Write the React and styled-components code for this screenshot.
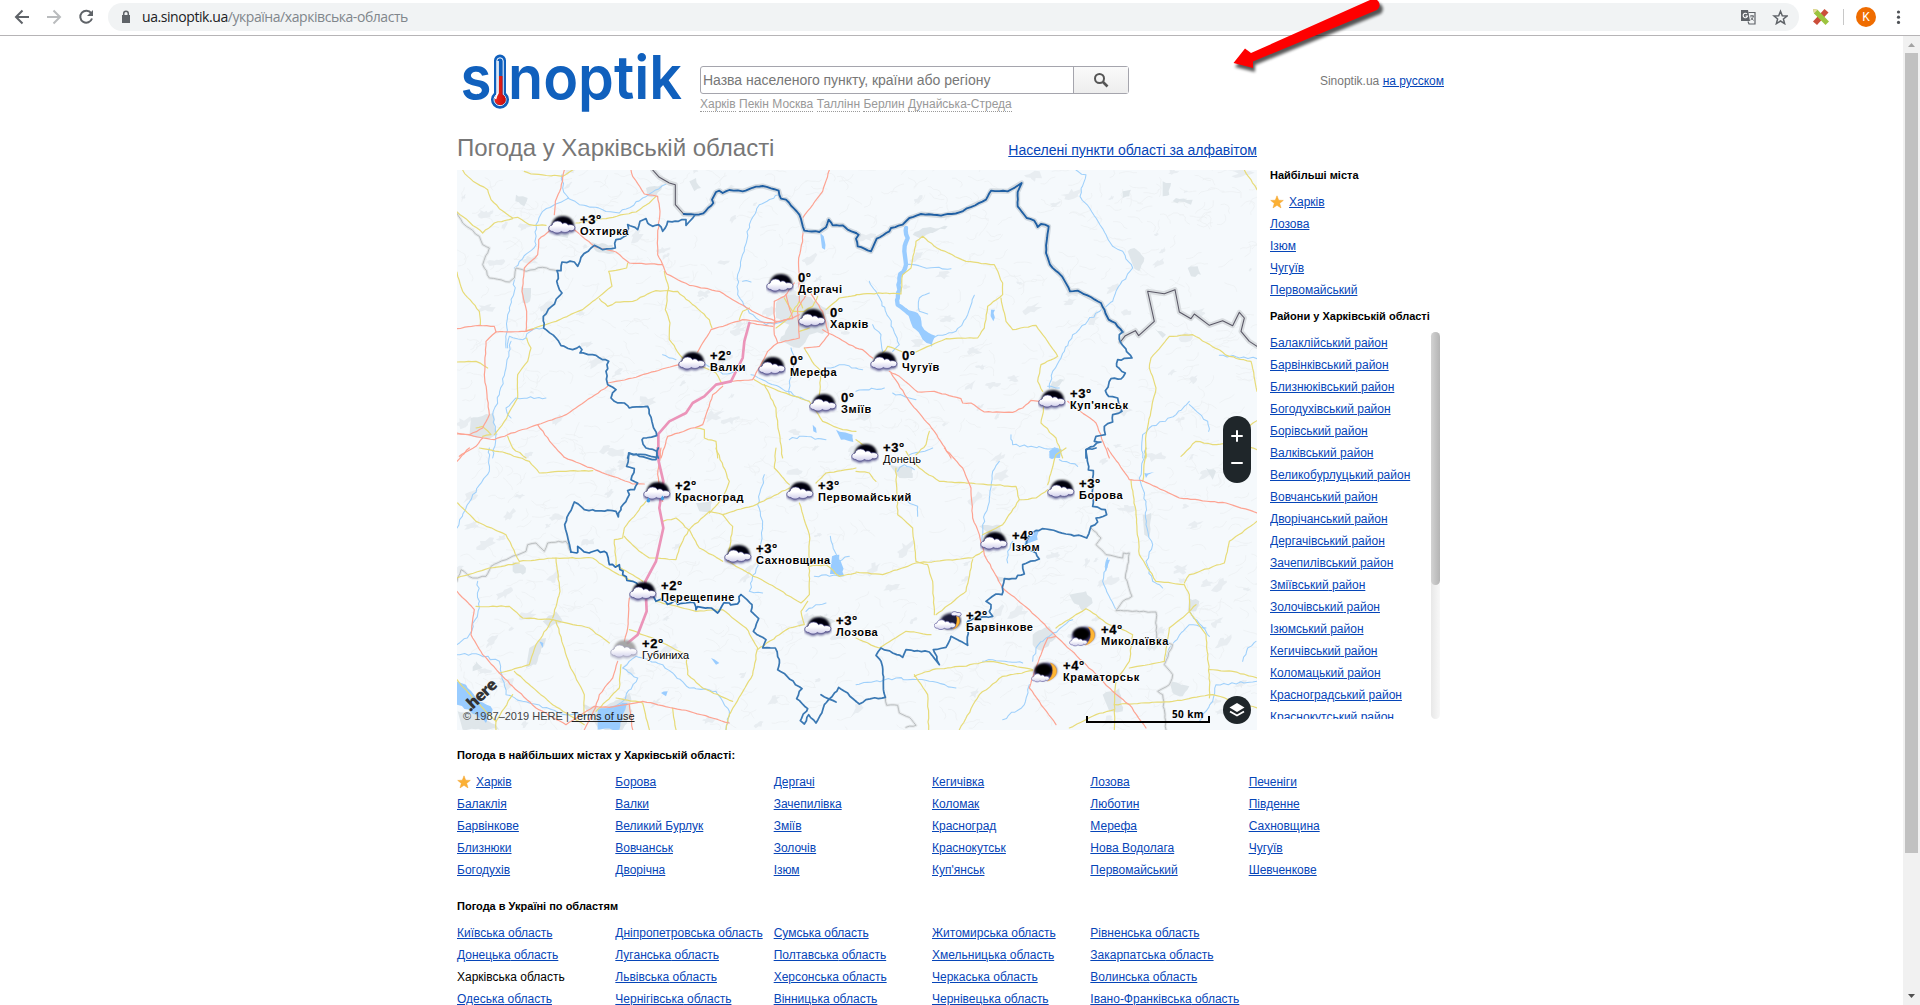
import React from "react";
import styled, { createGlobalStyle } from "styled-components";

const GlobalStyle = createGlobalStyle`
  html, body { margin: 0; height: 1005px; overflow: hidden; background: #fff; }
  * { box-sizing: border-box; }
  body { font-family: "Liberation Sans", Arial, sans-serif; font-size: 12px; color: #000; }
`;

/* ---------- browser frame ---------- */

const Screen = styled.div`
  position: relative;
  width: 1920px;
  height: 1005px;
  overflow: hidden;
  display: flex;
  flex-direction: column;
`;
const Toolbar = styled.header`
  flex: none;
  height: 36px;
  display: flex;
  align-items: center;
  padding: 0 0 2px 12px;
  border-bottom: 1px solid #b6b4b6;
  background: #fff;
`;
const NavButtons = styled.div`
  display: flex;
  gap: 12px;
  width: 96px;
`;
const Omnibox = styled.div`
  width: 1691px;
  height: 28px;
  border-radius: 14px;
  background: #f1f3f4;
  display: flex;
  align-items: center;
  padding: 0 11px 0 13px;
`;
const Url = styled.div`
  flex: 1;
  margin-left: 11px;
  font: 14px/20px "Open Sans", "Noto Sans", sans-serif;
  letter-spacing: -0.44px;
  color: #80868b;
  white-space: nowrap;
  b { font-weight: 400; color: #202124; letter-spacing: -0.43px; }
`;
const OmniIcons = styled.div`
  display: flex;
  align-items: center;
  gap: 16px;
`;
const ToolbarEnd = styled.div`
  display: flex;
  align-items: center;
  margin-left: 13px;
`;
const Divider = styled.span`
  width: 1px;
  height: 16px;
  margin: 0 12px 0 13px;
  background: #c8c8c8;
`;
const Avatar = styled.span`
  width: 20px;
  height: 20px;
  border-radius: 50%;
  background: #ef6c00;
  color: #fff;
  font: 12px/20px Roboto, sans-serif;
  text-align: center;
  margin-right: 20px;
`;
const Viewport = styled.div`
  flex: 1;
  display: flex;
  min-height: 0;
`;
const Page = styled.main`
  flex: 1;
  padding: 13px 0 0 457px;
  overflow: hidden;
`;
const ScrollTrack = styled.div`
  width: 17px;
  padding: 0 2px;
  background: #f1f1f1;
  display: flex;
  flex-direction: column;
  justify-content: space-between;
`;
const ScrollArrow = styled.svg`
  display: block;
  width: 13px;
  height: 17px;
`;
const ScrollThumb = styled.div`
  height: 800px;
  margin-bottom: auto;
  background: #c1c1c1;
`;
const RedArrow = styled.svg`
  position: absolute;
  left: 1220px;
  top: 0;
`;

/* ---------- page header ---------- */

const Header = styled.div`
  display: flex;
  width: 986px;
  height: 79px;
`;
const LogoSvg = styled.svg`
  flex: none;
  width: 243px;
  height: 78px;
  overflow: visible;
`;
const SearchBlock = styled.div`
  width: 429px;
  padding-top: 17px;
`;
const SearchBox = styled.div`
  display: flex;
  height: 28px;
  border: 1px solid #a5a5ad;
  border-radius: 3px;
`;
const SearchInput = styled.div`
  flex: 1;
  padding-left: 2px;
  font-size: 14px;
  line-height: 26px;
  letter-spacing: -0.02px;
  color: #777;
  white-space: nowrap;
`;
const SearchButton = styled.div`
  width: 55px;
  border-left: 1px solid #a5a5ad;
  background: linear-gradient(#fafafa, #ededed);
  display: flex;
  align-items: center;
  justify-content: center;
`;
const Hints = styled.div`
  display: flex;
  gap: 3.4px;
  padding-top: 3px;
  span {
    font-size: 12px;
    line-height: 14px;
    color: #999;
    border-bottom: 1px dotted #999;
    white-space: nowrap;
  }
`;
const LangSwitch = styled.div`
  margin: 0 -1px 0 auto;
  padding-top: 25px;
  line-height: 14px;
  color: #777;
`;
const Link = styled.a`
  color: #0645b8;
  text-decoration: underline;
  text-underline-offset: 1px;
  white-space: nowrap;
`;

/* ---------- content ---------- */

const Columns = styled.div`
  display: flex;
  gap: 13px;
`;
const MapColumn = styled.section`
  width: 800px;
`;
const TitleRow = styled.div`
  display: flex;
  justify-content: space-between;
  height: 42px;
`;
const Title = styled.h1`
  margin: 0;
  font-size: 24px;
  font-weight: 400;
  line-height: 40px;
  color: #777;
  white-space: nowrap;
`;
const TitleLink = styled(Link)`
  font-size: 14px;
  line-height: 45px;
`;
const SideColumn = styled.aside`
  width: 173px;
  padding-top: 40px;
`;
const SideHeading = styled.h2`
  margin: ${(p) => p.$top || 0}px 0 9px;
  font-size: 11px;
  line-height: 14px;
  font-weight: 700;
  white-space: nowrap;
`;
const List = styled.div`
  display: flex;
  flex-direction: column;
`;
const Item = styled.div`
  display: flex;
  align-items: center;
  height: 22px;
  line-height: 22px;
  white-space: nowrap;
  gap: 5px;
`;
const Districts = styled.div`
  display: flex;
  justify-content: space-between;
  width: 170px;
  height: 387px;
  overflow: hidden;
`;
const SideTrack = styled.div`
  width: 9px;
  height: 387px;
  border-radius: 5px;
  background: linear-gradient(90deg, #e8e8e8, #f8f8f8);
  &::before {
    content: "";
    display: block;
    height: 253px;
    border-radius: 5px;
    background: linear-gradient(90deg, #d2d2d2, #b4b4b4);
  }
`;
const SectionHeading = styled.h2`
  margin: 18px 0 9px;
  font-size: 11px;
  line-height: 14px;
  font-weight: 700;
`;
const Grid = styled.div`
  display: grid;
  width: 950px;
  grid-template-columns: repeat(6, 1fr);
  grid-template-rows: repeat(${(p) => p.$rows}, 22px);
  grid-auto-flow: column;
`;

/* ---------- map ---------- */

const MapBox = styled.div`
  position: relative;
  width: 800px;
  height: 560px;
  overflow: hidden;
  background: #f5f9fc;
`;
const MapCanvas = styled.svg`
  display: block;
`;
const Pin = styled.div`
  position: absolute;
  display: flex;
  gap: 4px;
  transform: translate(-14px, -12px);
`;
const PinText = styled.div`
  display: flex;
  flex-direction: column;
  white-space: nowrap;
  color: #000;
  text-shadow: 1px 0 #fff, -1px 0 #fff, 0 1px #fff, 0 -1px #fff;
`;
const Temp = styled.span`
  font-size: 13px;
  line-height: 12px;
  height: 11px;
  font-weight: 700;
  letter-spacing: 0.6px;
  -webkit-text-stroke: 0.3px #000;
`;
const PinName = styled.span`
  font-size: 11px;
  line-height: 12px;
  font-weight: ${(p) => (p.$minor ? 400 : 700)};
  letter-spacing: ${(p) => (p.$minor ? 0 : 0.55)}px;
`;
const ZoomPill = styled.div`
  position: absolute;
  left: 766px;
  top: 246px;
  width: 28px;
  height: 67px;
  border-radius: 14px;
  background: #1f262a;
`;
const LayerButton = styled.div`
  position: absolute;
  left: 766px;
  top: 526px;
  width: 28px;
  height: 28px;
  border-radius: 50%;
  background: #1f262a;
`;
const ScaleBar = styled.div`
  position: absolute;
  left: 629px;
  top: 546px;
  width: 124px;
  height: 7px;
  border: 2px solid #000;
  border-top: 0;
`;
const ScaleText = styled.div`
  position: absolute;
  left: 715px;
  top: 537px;
  font: 700 10px/14px "Noto Sans", sans-serif;
  letter-spacing: 0.4px;
`;
const Copyright = styled.div`
  position: absolute;
  left: 6px;
  top: 539px;
  line-height: 14px;
  font-size: 11px;
  color: #444;
  white-space: nowrap;
  u { color: #222; }
`;
const HereLogo = styled.div`
  position: absolute;
  left: 4px;
  top: 513px;
  font: 800 16px/24px "Open Sans", sans-serif;
  letter-spacing: -1px;
  color: #333;
  transform: rotate(-43deg);
`;

/* Terrain lines. Every quadrant has its own origin; units are thirds of a pixel. */
const quads = [
  {
    at: [0, 0],
    urban: ["960 405 990 378 1050 385 1110 420 1120 490 1060 500 1030 540 970 520 1000 470 960 450", "45 750 110 735 125 800 100 812 40 805", "195 355 225 360 222 400 200 405", "290 180 340 195 335 210 300 200", "180 80 215 90 205 115 178 100", "400 225 470 230 475 255 420 250", "700 40 720 30 735 60 715 70", "570 60 620 50 600 85 575 85"],
    lakes: ["1092 190 1103 205 1107 245 1098 240", "1140 785 1190 800 1192 822 1155 815", "1070 770 1080 780 1082 795 1072 790"],
    rivers: ["318 20 320 60 338 90 260 130 240 170 240 230 175 300 175 370 155 440 150 540", "335 90 370 110 440 125 490 135 560 90 640 42", "263 480 230 485 200 515 160 505 155 540", "970 80 910 110 880 170 865 250 845 320 845 380 880 435 930 470 1000 455", "165 520 150 600 130 680 110 740 120 800 110 870", "165 750 150 720 180 690 270 690", "750 590 800 618 850 610 860 590", "885 620 930 640 990 670 1060 700", "1005 540 1020 580 1000 640 1000 680", "1000 815 1030 805 1110 815", "1200 600 1150 590 1110 600", "620 560 660 575", "860 340 885 342"],
    yellow: ["20 6 35 25 60 45 95 65 105 95 130 122 170 150 185 148 220 170 270 172", "3 132 80 195 115 165 170 152", "205 10 225 18 320 25 350 6", "360 165 450 152 540 132 580 105 600 85", "3 312 20 370 70 430 73 470", "212 488 300 460 380 425 468 355 458 310 512 300 515 285", "430 392 455 415 480 402 530 400 600 368 665 370 700 400 760 455 768 480", "625 310 638 360 628 425 642 465 640 515 680 570", "212 510 225 540 215 580 185 620 185 690 145 760 115 800", "3 582 60 580 95 600", "155 805 170 840 210 870", "730 590 780 615 800 650", "895 635 920 650 1000 680 1060 700 1100 760 1160 785 1200 790", "925 650 960 720 965 770 980 870", "720 780 745 785 745 810 780 820 785 870", "1045 540 1075 590 1095 610 1090 680", "1110 425 1150 390 1200 382", "985 390 1010 430 1045 430 1070 415 1085 385", "960 480 1000 450 1030 400 1040 420", "60 780 80 775 105 800 80 805", "850 455 860 430 880 420", "1030 490 1060 480"],
    red: ["325 6 315 60 298 100 295 140", "290 180 248 215 245 260 205 300 198 370 212 430 210 490", "3 482 70 472 115 475 120 492 210 490 230 485", "120 492 90 520 85 620 100 740 80 780 40 800 3 798", "3 795 115 815 155 800 245 770 330 740 455 655", "80 810 60 835 10 865", "245 770 290 830 325 868", "455 645 530 630 630 600 670 590", "355 185 415 235 480 252 520 285 620 290 632 318 700 352 790 370 830 395 900 435 960 460 1010 452", "525 6 530 25 565 78 605 85 612 130 605 200 605 260 620 290", "1120 6 1100 70 1040 150 1040 220 1028 270 1030 400", "725 552 765 485 860 455 955 465 1010 450", "880 465 950 475", "955 400 955 500 965 525 1030 510 1025 420 1050 380", "820 640 890 635 935 550 965 525", "955 400 985 385 1015 345", "990 380 1010 450 1030 440", "1045 540 1090 535 1118 500 1100 430 1060 370", "1100 485 1200 540", "800 655 770 680 740 770 635 805 615 870"],
    pink: "880 465 865 520 860 570 825 640 780 650 745 685 710 705 690 735 640 760 607 798 607 870",
    minor: ["3 135 20 165 70 205 80 230 100 240 80 290 100 330 160 342 175 330 180 300 210 310 260 298 303 308"],
    state: ["590 6 610 28 640 45 658 50 658 110 683 138"],
    blueState: ["683 138 716 140 742 136 772 105 768 95 780 72 790 68 800 75 820 66 860 70 900 56 920 54 968 68 975 92 990 95 1030 140 1045 188 1090 192 1110 178 1118 155 1130 172 1160 172 1175 185 1200 195"],
    blue: ["607 870 602 850 570 840 558 815 562 810 602 803 575 715 520 720 505 705 475 700 465 690 480 665 455 650 450 610 458 580 440 575 420 562 372 555 378 545 370 535 350 545 315 533 300 510 263 480 262 445 318 375 305 350 303 308 315 308 318 282 355 282 365 295 375 268 415 232 440 245 478 240 480 215 515 200 515 170 545 185 552 160 570 152 575 165 590 175 608 170 620 190 635 160 690 155 690 172 716 142", "515 870 520 855 602 868"],
  },
  {
    at: [1200, 0],
    urban: ["170 200 200 180 275 175 230 195 190 210", "815 250 835 240 865 270 850 310 830 290", "920 40 945 45 940 80 920 85", "995 300 1025 295 1035 320 1005 325", "800 70 825 65 820 85 800 90", "590 640 625 635 600 660 580 660", "895 480 930 500 920 510", "960 90 1010 95 1005 110 950 100"],
    lakes: ["150 420 185 435 205 485 238 503 228 538 195 505 165 465", "405 425 417 425 412 460 404 445", "580 850 595 838 618 845 612 870 580 870"],
    wide: ["150 180 155 210 145 250 150 290 130 330 125 410 165 440"],
    rivers: ["150 290 200 297 285 302", "220 375 190 390 190 430 215 438", "355 382 335 440 300 490 235 508", "40 340 65 380 100 450 130 530 110 550", "50 470 75 500 80 550", "660 6 690 20 672 85 720 150 770 235 800 250 830 300 780 370 770 400 740 420 650 500 625 550 590 610 580 660", "465 800 470 830 610 845", "1000 700 960 740 880 780 860 800 860 870", "1000 710 1055 760 1058 790", "1090 562 1203 572", "0 670 85 660", "110 675 180 695", "575 655 610 660", "0 600 20 605", "160 860 230 840"],
    yellow: ["0 380 90 375 135 378 140 320 165 300 180 220 200 205 235 235 330 280 415 290 440 345 440 380 395 415 385 480 365 510 270 512 180 552 140 552 95 535 80 555", "435 390 450 460 470 485 540 472 560 500 605 565 555 590 545 640 560 670", "565 710 555 765 600 810 620 870", "1165 6 1203 65", "1203 670 1185 580 1120 565 1010 500 940 505 885 570 880 600 900 660 870 800 870 870", "975 865 1020 820 1070 830 1150 825 1203 845", "220 790 210 830 180 860", "0 815 30 835", "1203 758 1150 790"],
    red: ["0 540 20 545 50 570", "100 610 130 625 185 672 235 670 315 692 320 705 345 705 385 732 470 733 500 720 525 697 550 700", "105 615 160 700 235 790 285 870", "635 700 720 765 760 870"],
    state: ["793 522 808 503 838 488 848 503 895 460 875 370 925 377 957 365 970 432 1005 452 1015 438 1060 472 1100 458 1130 473 1150 433 1165 450 1155 490 1180 520 1203 535"],
    blueState: ["0 195 8 200 0 212 5 235 45 250 62 212 100 190 105 180 140 170 160 150 195 138 255 143 310 133 390 95 405 68 455 70 497 45 485 72 485 115 512 150 535 158 545 177 555 168 578 175 572 220 570 255 582 290 618 325 642 370 665 368 735 405 758 455 778 465 800 492"],
    blue: ["800 492 790 500 793 522 828 570 785 575 782 595 808 615 795 633 765 632 748 668 758 685 785 690 788 705 798 730 770 740 770 762 745 775 748 800 720 805 715 820 735 822 690 845 690 870"],
  },
  {
    at: [0, 840],
    urban: ["5 790 40 790 120 830 130 845 20 845", "380 770 440 780 520 735 530 790 500 845 430 845", "260 520 300 490 320 520 280 540", "220 600 270 570 240 650 210 660", "1090 500 1140 520 1110 530", "170 340 210 360 200 380 170 370", "720 165 770 155 765 195 730 190", "50 670 60 640 80 660"],
    lakes: ["3 700 30 710 60 750 110 785 90 825 60 800 3 770", "425 785 515 765 500 800 490 845 425 845", "615 735 635 730 630 745", "250 580 262 585 260 600", "765 630 790 645 780 650", "1128 325 1150 320 1165 385 1122 378"],
    rivers: ["100 0 100 70 50 140 3 240", "65 400 70 480 40 560 3 590", "3 620 70 620 130 640 150 740 200 760 330 800 400 800", "925 80 905 170 920 220 910 330 880 430 920 435", "540 625 620 650 700 720 780 730 820 790 810 845", "540 625 500 660 545 690 500 760 450 800", "1150 385 1110 380 1075 385", "1050 490 1080 470 1110 465", "1123 265 1130 290 1148 330", "1150 340 1180 325"],
    yellow: ["70 0 140 12 220 40 250 75 330 70 410 68", "5 165 60 220 150 260 190 340 300 330 410 330 470 370 530 400", "3 390 100 360 190 345", "60 475 160 475 200 510 290 515 400 540 460 585", "300 330 312 430 290 510", "290 515 240 590 220 650 130 675", "300 520 340 650 385 740 385 800", "570 160 505 240 500 270 475 275 480 350", "505 265 550 310 580 330 660 335 670 300 698 245 660 210 620 220", "700 245 760 190 800 200 830 235 815 340 850 360 960 420 1035 465 1060 440 1060 260 1030 165", "700 245 730 300 800 340", "780 0 820 100 800 150 760 195", "1000 120 900 170 800 200", "960 0 955 60 1000 110", "1080 105 1110 75 1200 60", "600 460 720 490 800 485 870 540 905 600 890 680 820 800 810 845", "905 605 1000 540 1045 530 1035 490 1055 460", "520 545 590 570 690 620 695 680 740 720 830 760", "1060 355 1110 350 1150 385 1200 375", "495 650 490 720 450 760 420 790", "175 670 290 770 385 830", "480 750 560 765 580 845", "3 695 60 760 120 820 170 740", "650 780 660 845", "480 350 560 400", "120 820 120 845"],
    red: ["325 28 430 70 530 108 565 108", "3 430 55 485 45 560 80 620 130 675 170 715 240 780 330 830 415 775 460 778 560 760 700 790 820 825", "520 450 515 540 505 580", "485 640 470 690 430 740 418 780", "40 0 3 40", "615 0 605 80 620 160", "418 780 385 845", "520 770 530 845"],
    pink: "605 0 608 40 622 100 610 180 622 240 600 340 568 400 572 490 545 560 515 585",
    minor: ["3 400 15 365 50 390 90 385 105 355 160 330 210 310 215 290 240 285 265 310 275 285 330 280 345 312"],
    blue: ["1200 760 1175 735 1148 718 1105 770 1080 825 1058 800 1045 828 1033 818 1055 782 1022 752 1038 722 965 665 970 635 958 600 920 600 930 575 892 550 908 512 885 490 888 470 855 440", "607 0 600 35 518 15 512 55 535 62 525 95 545 105 535 125 515 128 520 140 495 178 487 207 480 190 385 185 355 162 326 230 345 312", "1095 740 1140 762"],
    blueRough: ["855 440 850 460 820 465 785 495 765 480 720 485 715 465 690 465 600 460 595 450 550 430 530 400 500 380 490 350 460 350 445 310 400 315 365 295 362 315 345 312"],
  },
  {
    at: [1200, 840],
    urban: ["530 560 580 535 600 570 560 610 530 590", "640 440 690 430 710 465 680 490 650 460", "420 385 470 390 460 400 425 400", "740 740 790 720 800 790 760 790", "1000 450 1030 460 1020 490 995 490", "940 700 1000 715 980 745 950 735", "370 235 430 230 440 270 390 250", "100 50 170 60 170 90 130 90", "860 200 885 195 880 270 865 260", "1050 60 1080 70 1070 95"],
    lakes: ["580 10 610 5 610 30 590 32", "505 290 520 255 548 250 545 275", "750 335 762 335 745 385", "865 75 895 72 870 90"],
    rivers: ["430 40 410 70 400 150 380 230 378 280", "155 160 185 175 185 205", "870 0 850 90 870 160 870 230 890 290 870 340 890 400 920 420", "755 330 740 400 780 485", "0 710 120 690 220 700 300 720", "530 640 540 600 570 570 650 515", "520 710 505 770 440 815", "930 640 940 600 1000 530 1050 540", "1000 490 1060 565", "1203 700 1080 710 1070 760 1030 820", "1160 640 1175 600 1200 580", "380 640 410 635 500 645", "610 35 665 55", "455 345 455 310 470 280", "125 70 145 50 175 65"],
    yellow: ["0 70 40 75 60 100", "120 60 125 200 170 240 180 340 215 350 230 400 235 500", "0 372 80 380 180 345 350 330 380 310", "350 335 330 430 240 500", "150 10 190 60 250 100 370 108 480 115 490 155 540 150 575 125", "490 155 440 230 380 260", "630 0 600 20 575 110", "0 570 70 600 150 550 225 560", "175 685 230 665 320 655 400 640 530 665", "175 680 215 740 218 845", "310 845 370 740 440 685 530 668", "600 540 690 482 760 530 800 545 830 560 820 640 780 700 775 770 775 845", "825 95 840 200 850 320 900 400 985 410 1000 440 1000 490 1050 560 1060 680 1060 750", "985 405 1000 380 1105 345 1120 280 1203 220", "1060 665 1130 670 1203 690", "775 770 950 760 1070 740 1203 780", "1020 470 990 500 940 540 925 640 820 660", "640 840 720 800 775 785", "870 0 860 100"],
    red: ["265 0 320 60 345 120 350 210 370 260 385 320 440 420 520 485 600 565 690 650 770 730 820 770 870 840", "600 565 575 570 555 620 540 660 520 720 600 830", "755 0 820 95 860 98 970 150 1110 165 1203 195"],
    minor: ["705 240 735 270 720 290 750 320 800 330 802 315 820 315 808 390 828 445 800 460 780 488 900 492 902 570 950 590 925 650 950 680 940 710 905 730 920 740 930 845", "88 748 92 772 125 772 130 795 160 808 180 832 150 838"],
    blue: ["720 0 690 5 697 66 712 68 710 175 748 185 752 200 720 210 725 222 705 235 692 270 570 243 540 247 520 262 505 300 540 315 550 333 500 350 505 378 485 382 480 392 445 392 438 440 420 438 390 460 405 470 400 490 410 505 365 505 335 520 335 592 285 565 270 598 232 605 250 650 220 612 150 605 140 628 110 615 75 600 60 622 75 640 82 700 88 748 30 755 10 768 0 760"],
  },
];

function makeRandom(seed) {
  let s = seed;
  return () => {
    s = (s * 16807) % 2147483647;
    return s / 2147483647;
  };
}

function toPath(text, amp = 0, close = false) {
  const n = text.split(" ").map(Number);
  const rnd = makeRandom(n[0] * 31 + n[1] * 17 + 7);
  let d = `M${n[0]} ${n[1]}`;
  for (let i = 2; i < n.length; i += 2) {
    const [x0, y0, x1, y1] = [n[i - 2], n[i - 1], n[i], n[i + 1]];
    const len = Math.hypot(x1 - x0, y1 - y0);
    const steps = amp ? Math.max(1, Math.round(len / 12)) : 1;
    for (let k = 1; k <= steps; k++) {
      const t = k / steps;
      const j = k === steps ? 0 : amp;
      d += `L${(x0 + (x1 - x0) * t + (rnd() - 0.5) * 2 * j).toFixed(1)} ${(y0 + (y1 - y0) * t + (rnd() - 0.5) * 2 * j).toFixed(1)}`;
    }
  }
  return close ? d + "Z" : d;
}

function makeRelief() {
  const rnd = makeRandom(4711);
  let lines = "";
  let patches = "";
  for (let i = 0; i < 1300; i++) {
    let x = rnd() * 2400;
    let y = rnd() * 1680;
    let a = -0.8 + rnd() * 1.3;
    lines += `M${x.toFixed(0)} ${y.toFixed(0)}`;
    for (let k = 0; k < 5; k++) {
      a += (rnd() - 0.5) * 1.8;
      x += Math.cos(a) * 11;
      y += Math.sin(a) * 9;
      lines += `L${x.toFixed(0)} ${y.toFixed(0)}`;
    }
  }
  for (let i = 0; i < 190; i++) {
    const cx = rnd() * 2400;
    const cy = rnd() * 1680;
    const w = 8 + rnd() * 22;
    const tilt = -0.9 + rnd() * 0.9;
    for (let k = 0; k < 13; k++) {
      const t = (k / 13) * Math.PI * 2;
      const r = 0.35 + rnd() * 1;
      const px = Math.cos(t) * w * r;
      const py = Math.sin(t) * w * 0.5 * r;
      const x = cx + px * Math.cos(tilt) - py * Math.sin(tilt);
      const y = cy + px * Math.sin(tilt) + py * Math.cos(tilt);
      patches += `${k ? "L" : "M"}${x.toFixed(0)} ${y.toFixed(0)}`;
    }
    patches += "Z";
  }
  return { lines, patches };
}
const relief = makeRelief();

function Strokes({ name, amp, ...rest }) {
  return (
    <g fill="none" strokeLinejoin="round" strokeLinecap="round" {...rest}>
      {quads.map((q, i) => (
        <g key={i} transform={`translate(${q.at[0]} ${q.at[1]})`}>
          {[].concat(q[name] || []).map((t) => (
            <path key={t} d={toPath(t, amp)} />
          ))}
        </g>
      ))}
    </g>
  );
}

function Areas({ name, fill }) {
  return quads.map((q, i) => (
    <g key={i} fill={fill} transform={`translate(${q.at[0]} ${q.at[1]})`}>
      {q[name].map((t) => (
        <path key={t} d={toPath(t, 4, true)} />
      ))}
    </g>
  ));
}

function Terrain() {
  return (
    <MapCanvas width="800" height="560" viewBox="3 6 2400 1680">
      <path d={relief.lines} fill="none" stroke="#edf1f3" strokeWidth="2.5" />
      <path d={relief.patches} fill="#e8edf1" />
      <Areas name="urban" fill="#dfe6ea" />
      <Areas name="lakes" fill="#99ccff" />
      <Strokes name="wide" amp={3} stroke="#99ccff" strokeWidth="13" />
      <Strokes name="rivers" amp={3.5} stroke="#9fd0fb" strokeWidth="3.2" />
      <Strokes name="minor" amp={2} stroke="#e6e9eb" strokeWidth="9" />
      <Strokes name="minor" amp={2} stroke="#b3b7ba" strokeWidth="2.6" />
      <Strokes name="yellow" amp={1.5} stroke="#e7db78" strokeWidth="3.6" />
      <Strokes name="red" amp={1.2} stroke="#fda392" strokeWidth="3.6" />
      <Strokes name="pink" stroke="#eb94b9" strokeWidth="8" />
      <Strokes name="state" stroke="#d9dde0" strokeWidth="15" />
      <Strokes name="blueState" stroke="#d3dae0" strokeWidth="15" />
      <Strokes name="state" stroke="#5a5866" strokeWidth="3.2" />
      <Strokes name="blueState" amp={1.5} stroke="#1f5fa3" strokeWidth="5.6" />
      <Strokes name="blue" amp={3} stroke="#3a78b3" strokeWidth="5.2" />
      <Strokes name="blueRough" amp={8} stroke="#2d6fb0" strokeWidth="5.2" />
    </MapCanvas>
  );
}

const cloudPath = "M5 17.5C2.4 17.5 .8 16 .8 14.2C.8 12.4 2.2 11.3 4 11.2C4.6 8.6 6.8 7 9.5 7C11.8 7 13.6 8 14.5 9.7C15.2 9 16.3 8.7 17.4 9C18.8 9.2 19.6 10 20 11C23.6 10 26.9 11.2 26.9 13.8C26.9 16.4 23.6 17.4 21.4 16.5C20 18.8 15.4 19 13.2 17.4C11.4 19.4 6.8 19.6 5 17.5Z";

function NightSky({ moon }) {
  return moon ? (
    <>
      <ellipse cx="14.5" cy="11.5" rx="11.5" ry="8.4" fill="#35326b" transform="rotate(-12 15 12)" filter="url(#soft)" />
      <ellipse cx="12.5" cy="10" rx="8.5" ry="6.500" fill="#000" filter="url(#soft)" />
      <path d="M19.500 3C28.500 6.500 27.500 18 16.500 21C22 16.500 23.500 9.500 19.500 3Z" fill="#ffb733" stroke="#f29a1f" strokeWidth=".5" />
    </>
  ) : (
    <>
      <ellipse cx="16.5" cy="11.5" rx="10.5" ry="8" fill="#1c1a3a" transform="rotate(-12 15 12)" filter="url(#soft)" />
      <path d="M22 4.500C28 8.500 26 16.500 19.500 19C23 15 24 9.500 22 4.500Z" fill="#ffb733" stroke="#f29a1f" strokeWidth=".5" />
      <path d="M17 4C18 1.6 21 .8 23 2.6C26 2 28 3.4 27 5.2C26 6.8 23 6.5 22 5.4C20 6 17.500 5.800 17 4Z" fill="#f2f0fb" stroke="#625f9c" strokeWidth=".8" />
    </>
  );
}

function WeatherIcon({ kind }) {
  const pale = kind === "pale";
  const moon = kind === "moon";
  const mixed = kind === "mixed";
  return (
    <svg width="28" height="24" viewBox="0 0 28 24">
      <defs>
        <linearGradient id="cloudFill" x1="0" y1="0" x2="0" y2="1">
          <stop offset="0.4" stopColor="#fff" />
          <stop offset="1" stopColor="#cfcdea" />
        </linearGradient>
        <filter id="soft" x="-20%" y="-20%" width="140%" height="150%">
          <feGaussianBlur stdDeviation="0.8" />
        </filter>
      </defs>
      {moon || mixed ? (
        <>
          <NightSky moon={moon} />
          <g transform={moon ? "translate(0 9) scale(.68)" : "translate(-.5 4) scale(.82)"}>
            <path d={cloudPath} fill="url(#cloudFill)" stroke="#6c69a5" strokeWidth="1" />
          </g>
        </>
      ) : (
        <g opacity={pale ? 0.85 : 1}>
          <path d="M3.500 12C4.500 5 9 2 15 2C21 2 26 6 26 12L25 16L8 17Z" fill={pale ? "#999" : "#05050c"} filter="url(#soft)" />
          <path d={cloudPath} transform="translate(0 1.500)" fill={pale ? "#8d8ba8" : "#3b3979"} stroke={pale ? "#8d8ba8" : "#3b3979"} strokeWidth="1" opacity=".7" filter="url(#soft)" />
          <path d={cloudPath} fill="url(#cloudFill)" stroke={pale ? "#9795b5" : "#4a4787"} strokeWidth=".7" />
          {kind === "rain" && (
            <g fill="#3f9be0">
              <path d="M5.500 17.500L7 20A1.800 1.800 0 1 1 3.700 20Z" />
              <path d="M19.500 15.500L20.800 17.800A1.600 1.600 0 1 1 18 17.800Z" />
            </g>
          )}
        </g>
      )}
    </svg>
  );
}

const pins = [
  [318, 173, "+3°", "Охтирка"],
  [972, 347, "0°", "Дергачі"],
  [1067, 453, "0°", "Харків"],
  [708, 582, "+2°", "Валки"],
  [948, 597, "0°", "Мерефа"],
  [1100, 707, "0°", "Зміїв"],
  [1284, 582, "0°", "Чугуїв"],
  [1788, 695, "+3°", "Куп'янськ"],
  [1228, 858, "+3°", "Донець", "", true],
  [603, 972, "+2°", "Красноград", "rain"],
  [1032, 971, "+3°", "Первомайський"],
  [846, 1160, "+3°", "Сахновщина"],
  [560, 1271, "+2°", "Перещепине"],
  [503, 1447, "+2°", "Губиниха", "pale", true],
  [1085, 1376, "+3°", "Лозова"],
  [1814, 965, "+3°", "Борова"],
  [1613, 1121, "+4°", "Ізюм"],
  [1475, 1361, "+2°", "Барвінкове", "mixed"],
  [1881, 1403, "+4°", "Миколаївка", "moon"],
  [1767, 1511, "+4°", "Краматорськ", "moon"],
];

function WeatherMap() {
  return (
    <MapBox>
      <Terrain />
      {pins.map(([x, y, temp, name, kind, minor]) => (
        <Pin key={name} style={{ left: Math.round((x - 3) / 3), top: Math.round((y - 6) / 3) }}>
          <WeatherIcon kind={kind} />
          <PinText>
            <Temp>{temp}</Temp>
            <PinName $minor={minor}>{name}</PinName>
          </PinText>
        </Pin>
      ))}
      <HereLogo>.here</HereLogo>
      <Copyright>© 1987–2019 HERE | <u>Terms of use</u></Copyright>
      <ScaleText>50 km</ScaleText>
      <ScaleBar />
      <ZoomPill>
        <svg width="28" height="67" stroke="#fff" strokeWidth="2" strokeLinecap="round">
          <path d="M9 20H19M14 15V25M9 47H19" />
        </svg>
      </ZoomPill>
      <LayerButton>
        <svg width="28" height="28">
          <path d="M14 7L21.500 11.500L14 16L6.500 11.500Z" fill="#fff" />
          <path d="M7 15.500L14 19.500L21 15.500" fill="none" stroke="#fff" strokeWidth="1.800" />
        </svg>
      </LayerButton>
    </MapBox>
  );
}

/* ---------- small drawings ---------- */

function Star() {
  return (
    <svg width="14" height="14" viewBox="0 0 14 14">
      <path d="M7 .8L8.700 5.200L13.300 5.400L9.700 8.300L11 12.900L7 10.300L3 12.900L4.300 8.300L.7 5.400L5.300 5.200Z" fill="#fbb034" stroke="#f3a32c" strokeWidth=".5" />
    </svg>
  );
}

function Logo() {
  return (
    <LogoSvg viewBox="0 0 243 78">
      <defs>
        <linearGradient id="mercury">
          <stop offset="0" stopColor="#f3291f" />
          <stop offset="1" stopColor="#c40b0b" />
        </linearGradient>
      </defs>
      <g fill="#1060bd" fontFamily="Inter, sans-serif" fontWeight="600" fontSize="60.5">
        <text x="3.500" y="49.500" textLength="31" lengthAdjust="spacingAndGlyphs">s</text>
        <text x="51" y="49.500" textLength="174" lengthAdjust="spacingAndGlyphs">noptik</text>
      </g>
      <path d="M37 11.500A6 6 0 0 1 49 11.500V44A9 9 0 1 1 37 44Z" fill="#1060bd" />
      <path d="M39.800 12A3.200 3.200 0 0 1 46.200 12V45.500A6 6 0 1 1 39.800 45.500Z" fill="#1060bd" stroke="#fff" strokeWidth="1" />
      <path d="M42 27H45.500V45.500A5.600 5.600 0 1 1 41 45.500Z" fill="url(#mercury)" />
      <path d="M41 12V44Q39 47 38.500 50" fill="none" stroke="#fff" strokeWidth="1.600" />
    </LogoSvg>
  );
}

function BrowserBar() {
  return (
    <Toolbar>
      <NavButtons>
        <svg width="20" height="20" fill="none" stroke="#5f6368" strokeWidth="2"><path d="M17 10H4M10.500 3.500L4 10L10.500 16.500" /></svg>
        <svg width="20" height="20" fill="none" stroke="#babcbe" strokeWidth="2"><path d="M3 10H16M9.500 3.500L16 10L9.500 16.500" /></svg>
        <svg width="20" height="20" fill="none" stroke="#5f6368" strokeWidth="2"><path d="M15.200 6.200A6 6 0 1 0 16 11.500" /><path d="M17 3V9H11Z" fill="#5f6368" stroke="none" /></svg>
      </NavButtons>
      <Omnibox>
        <svg width="10" height="14"><path d="M1 5H9V13H1Z" fill="#5f6368" /><path d="M2.700 6V3.500A2.300 2.300 0 0 1 7.300 3.500V6" fill="none" stroke="#5f6368" strokeWidth="1.500" /></svg>
        <Url><b>ua.sinoptik.ua</b>/україна/харківська-область</Url>
        <OmniIcons>
          <svg width="16" height="16">
            <path d="M1 1H8L10 12H1Z" fill="#5f6368" />
            <path d="M8.500 3.500H15V15H9L8 12.500" fill="none" stroke="#5f6368" strokeWidth="1.200" />
            <path d="M7 5A2.200 2.200 0 1 0 7.500 7H5.500" fill="none" stroke="#fff" strokeWidth="1.100" />
            <path d="M10 7H14M12 6V7M13.300 7C13 9.500 11.500 10.500 10.500 11M11 8.500L13.500 11.500" fill="none" stroke="#5f6368" />
          </svg>
          <svg width="16" height="16" viewBox="-.5 -.5 16 16"><path d="M8 1.800L9.800 6.200L14.500 6.500L10.900 9.500L12.100 14.100L8 11.500L3.900 14.100L5.100 9.500L1.500 6.500L6.200 6.200Z" fill="none" stroke="#5f6368" strokeWidth="1.500" /></svg>
        </OmniIcons>
      </Omnibox>
      <ToolbarEnd>
        <svg width="18" height="18">
          <path d="M12.500 1L16.500 4.500L5 17L1 13.500Z" fill="#cb4e3a" />
          <path d="M1 1L5.500 1.800L17 13.500L13.500 17L2 5.500Z" fill="#9cc43f" />
          <path d="M1 1L5.500 1.800L2.200 5.200Z" fill="#ecd9a0" />
        </svg>
        <Divider />
        <Avatar>K</Avatar>
        <svg width="4" height="14" viewBox="0 0 4 14" fill="#4f5257" overflow="visible"><circle cx="2.500" cy="2" r="1.600" /><circle cx="2.500" cy="7.200" r="1.600" /><circle cx="2.500" cy="12.400" r="1.600" /></svg>
      </ToolbarEnd>
    </Toolbar>
  );
}

/* ---------- data ---------- */

const bigCities = ["Харків", "Лозова", "Ізюм", "Чугуїв", "Первомайський"];
const districts = ["Балаклійський", "Барвінківський", "Близнюківський", "Богодухівський", "Борівський", "Валківський", "Великобурлуцький", "Вовчанський", "Дворічанський", "Дергачівський", "Зачепилівський", "Зміївський", "Золочівський", "Ізюмський", "Кегичівський", "Коломацький", "Красноградський", "Краснокутський"];
const cities = ["Харків", "Балаклія", "Барвінкове", "Близнюки", "Богодухів", "Борова", "Валки", "Великий Бурлук", "Вовчанськ", "Дворічна", "Дергачі", "Зачепилівка", "Зміїв", "Золочів", "Ізюм", "Кегичівка", "Коломак", "Красноград", "Краснокутськ", "Куп'янськ", "Лозова", "Люботин", "Мерефа", "Нова Водолага", "Первомайський", "Печеніги", "Південне", "Сахновщина", "Чугуїв", "Шевченкове"];
const regions = ["Київська", "Донецька", "Харківська", "Одеська", "Дніпропетровська", "Луганська", "Львівська", "Чернігівська", "Сумська", "Полтавська", "Херсонська", "Вінницька", "Житомирська", "Хмельницька", "Черкаська", "Чернівецька", "Рівненська", "Закарпатська", "Волинська", "Івано-Франківська"];
const hints = ["Харків", "Пекін", "Москва", "Таллінн", "Берлин", "Дунайська-Стреда"];

export default function App() {
  return (
    <Screen>
      <GlobalStyle />
      <BrowserBar />
      <Viewport>
        <Page>
          <Header>
            <Logo />
            <SearchBlock>
              <SearchBox>
                <SearchInput>Назва населеного пункту, країни або регіону</SearchInput>
                <SearchButton>
                  <svg width="16" height="16" fill="none" stroke="#555"><circle cx="6.500" cy="6.500" r="4.500" strokeWidth="2" /><path d="M10 10L14.500 14.500" strokeWidth="2.600" /></svg>
                </SearchButton>
              </SearchBox>
              <Hints>{hints.map((h) => <span key={h}>{h}</span>)}</Hints>
            </SearchBlock>
            <LangSwitch>Sinoptik.ua <Link>на русском</Link></LangSwitch>
          </Header>
          <Columns>
            <MapColumn>
              <TitleRow>
                <Title>Погода у Харківській області</Title>
                <TitleLink>Населені пункти області за алфавітом</TitleLink>
              </TitleRow>
              <WeatherMap />
            </MapColumn>
            <SideColumn>
              <SideHeading>Найбільші міста</SideHeading>
              <List>
                {bigCities.map((c, i) => (
                  <Item key={c}>{i === 0 && <Star />}<Link>{c}</Link></Item>
                ))}
              </List>
              <SideHeading $top={8}>Райони у Харківській області</SideHeading>
              <Districts>
                <List>
                  {districts.map((d) => <Item key={d}><Link>{d} район</Link></Item>)}
                </List>
                <SideTrack />
              </Districts>
            </SideColumn>
          </Columns>
          <SectionHeading>Погода в найбільших містах у Харківській області:</SectionHeading>
          <Grid $rows={5}>
            {cities.map((c, i) => (
              <Item key={c}>{i === 0 && <Star />}<Link>{c}</Link></Item>
            ))}
          </Grid>
          <SectionHeading>Погода в Україні по областям</SectionHeading>
          <Grid $rows={4}>
            {regions.map((r) => (
              <Item key={r}>{r === "Харківська" ? <span>{r} область</span> : <Link>{r} область</Link>}</Item>
            ))}
          </Grid>
        </Page>
        <ScrollTrack>
          <ScrollArrow><path d="M3 11L6.500 7L10 11Z" fill="#a3a3a3" /></ScrollArrow>
          <ScrollThumb />
          <ScrollArrow><path d="M3 6L6.500 10L10 6Z" fill="#505050" /></ScrollArrow>
        </ScrollTrack>
      </Viewport>
      <RedArrow width="180" height="90">
        <defs>
          <filter id="arrowShadow" x="-10%" y="-10%" width="120%" height="130%">
            <feGaussianBlur stdDeviation="1.600" />
          </filter>
        </defs>
        <path d="M13 63L25 48L30 53.500L152 0A5.500 5.500 0 0 1 158 10L33 61L33 68Z" fill="#000" opacity=".65" transform="translate(2 4)" filter="url(#arrowShadow)" />
        <path d="M13.500 63L25 48.500L31 53L150 0A5.500 5.500 0 0 1 157 10L33 61.500L33 68Z" fill="#fe0000" />
      </RedArrow>
    </Screen>
  );
}
